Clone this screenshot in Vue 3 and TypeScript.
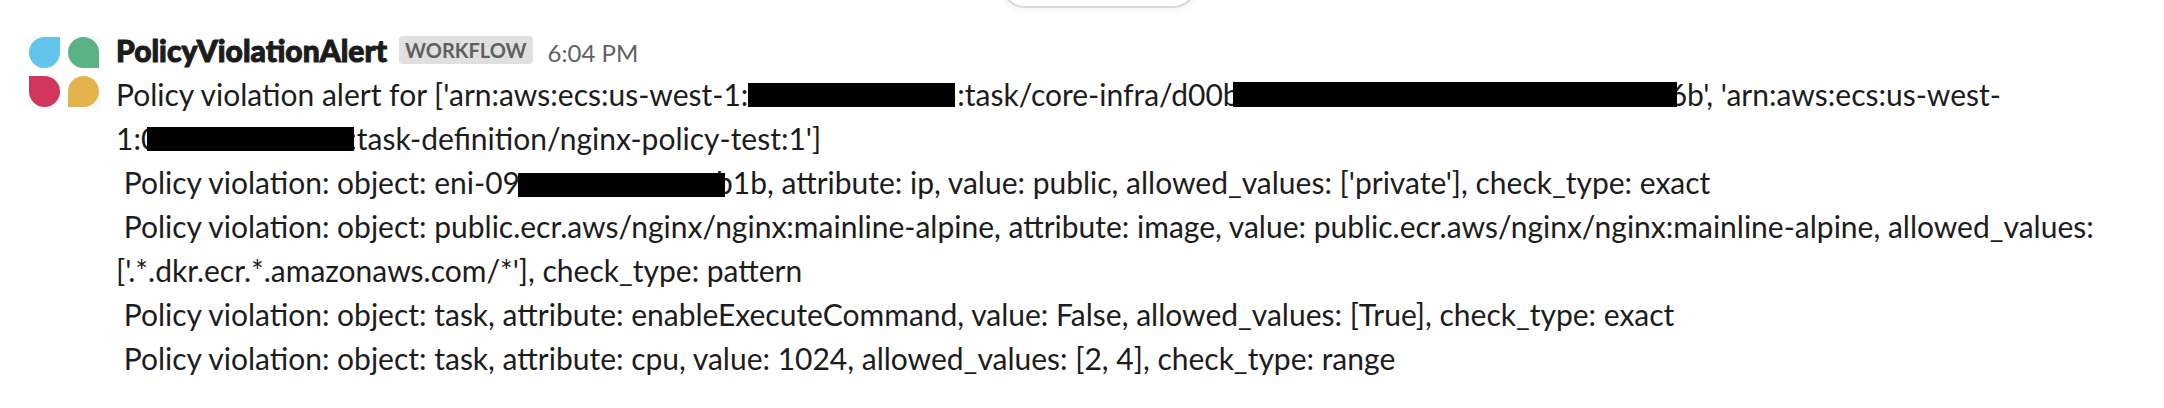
<script setup lang="ts">
const sender = 'PolicyViolationAlert'
</script>

<template>
  <main class="message">
    <div class="pill"></div>
    <svg class="avatar" viewBox="0 0 72 72" aria-hidden="true">
      <rect x="0.5" y="0.5" width="71" height="71" rx="8" fill="#fff" stroke="#f1f1f1" />
      <path d="M8 0H64M8 72H64M0 8V64M72 8V64" stroke="#fff" stroke-width="3" />
      <path d="M16.5 1H32V16.5A15.5 15.5 0 1 1 16.5 1Z" fill="#63c4ec" />
      <path d="M71 32H55.5A15.5 15.5 0 1 1 71 16.5Z" fill="#59b384" />
      <path d="M1 40H16.5A15.5 15.5 0 1 1 1 55.5Z" fill="#d1375d" />
      <path d="M40 71V55.5A15.5 15.5 0 1 1 55.5 71Z" fill="#e3b34c" />
    </svg>
    <div class="body">
      <header>
        <strong>{{ sender }}</strong>
        <span class="badge">WORKFLOW</span>
        <a href="#">6:04 PM</a>
      </header>
      <p>Policy violation alert for ['arn:aws:ecs:us-west-1:<i class="bar cluster"></i>:task/core-infra/d00b<i class="bar task"></i>6b', 'arn:aws:ecs:us-west-<span class="together">1:0<i class="bar definition"></i>:task-definition/nginx-policy-test:1']</span></p>
      <p>&nbsp;Policy violation: object: eni-09<i class="bar interface"></i>b1b, attribute: ip, value: public, allowed_values: ['private'], check_type: exact</p>
      <p>&nbsp;Policy violation: object: public.ecr.aws/nginx/nginx:mainline-alpine, attribute: image, value: public.ecr.aws/nginx/nginx:mainline-alpine, allowed_values: ['.*.dkr.ecr.*.amazonaws.com/*'], check_type: pattern</p>
      <p>&nbsp;Policy violation: object: task, attribute: enableExecuteCommand, value: False, allowed_values: [True], check_type: exact</p>
      <p>&nbsp;Policy violation: object: task, attribute: cpu, value: 1024, allowed_values: [2, 4], check_type: range</p>
    </div>
  </main>
</template>

<style scoped>
.message {
  position: relative;
  display: flex;
  gap: 16px;
  padding: 28px 48px 20px 28px;
  font: 30px/44px Lato, sans-serif;
  color: #1d1c1d;
}
.avatar { flex: none; width: 72px; height: 72px; margin-top: 8px; }
.body { flex: 1; min-width: 0; }
header { display: flex; align-items: baseline; height: 44px; }
strong { font-weight: 900; -webkit-text-stroke: 1px currentColor; }
.badge {
  align-self: center;
  margin: 0 15px 0 12px;
  padding: 0 6px;
  border-radius: 4px;
  font-size: 20px;
  line-height: 28px;
  font-weight: 700;
  background: #e0e0e0;
  color: #616061;
}
a { font-size: 24px; color: #616061; text-decoration: none; }
p { margin: 0; }
.together { white-space: nowrap; }

/* Redaction bars lie over the edges of the neighbouring letters. */
.bar {
  position: relative;
  display: inline-block;
  width: 207px;
  height: 24px;
  background: #000;
  vertical-align: -1px;
}
.cluster { margin-right: 2px; }
.task { width: 444px; height: 25px; margin: 0 -7px 0 -7px; }
.definition { margin: 0 -5px 0 -11px; }
.interface { margin: 0 -9px 0 -2px; vertical-align: -3px; }

.pill {
  position: absolute;
  top: -40px;
  left: calc(50% - 81px);
  box-sizing: border-box;
  width: 196px;
  height: 48px;
  border: 2px solid #d8d8d8;
  border-radius: 24px;
  box-shadow: 0 2px 6px rgba(0, 0, 0, 0.06);
}
</style>

<style>
body { background: #fff; }
</style>
